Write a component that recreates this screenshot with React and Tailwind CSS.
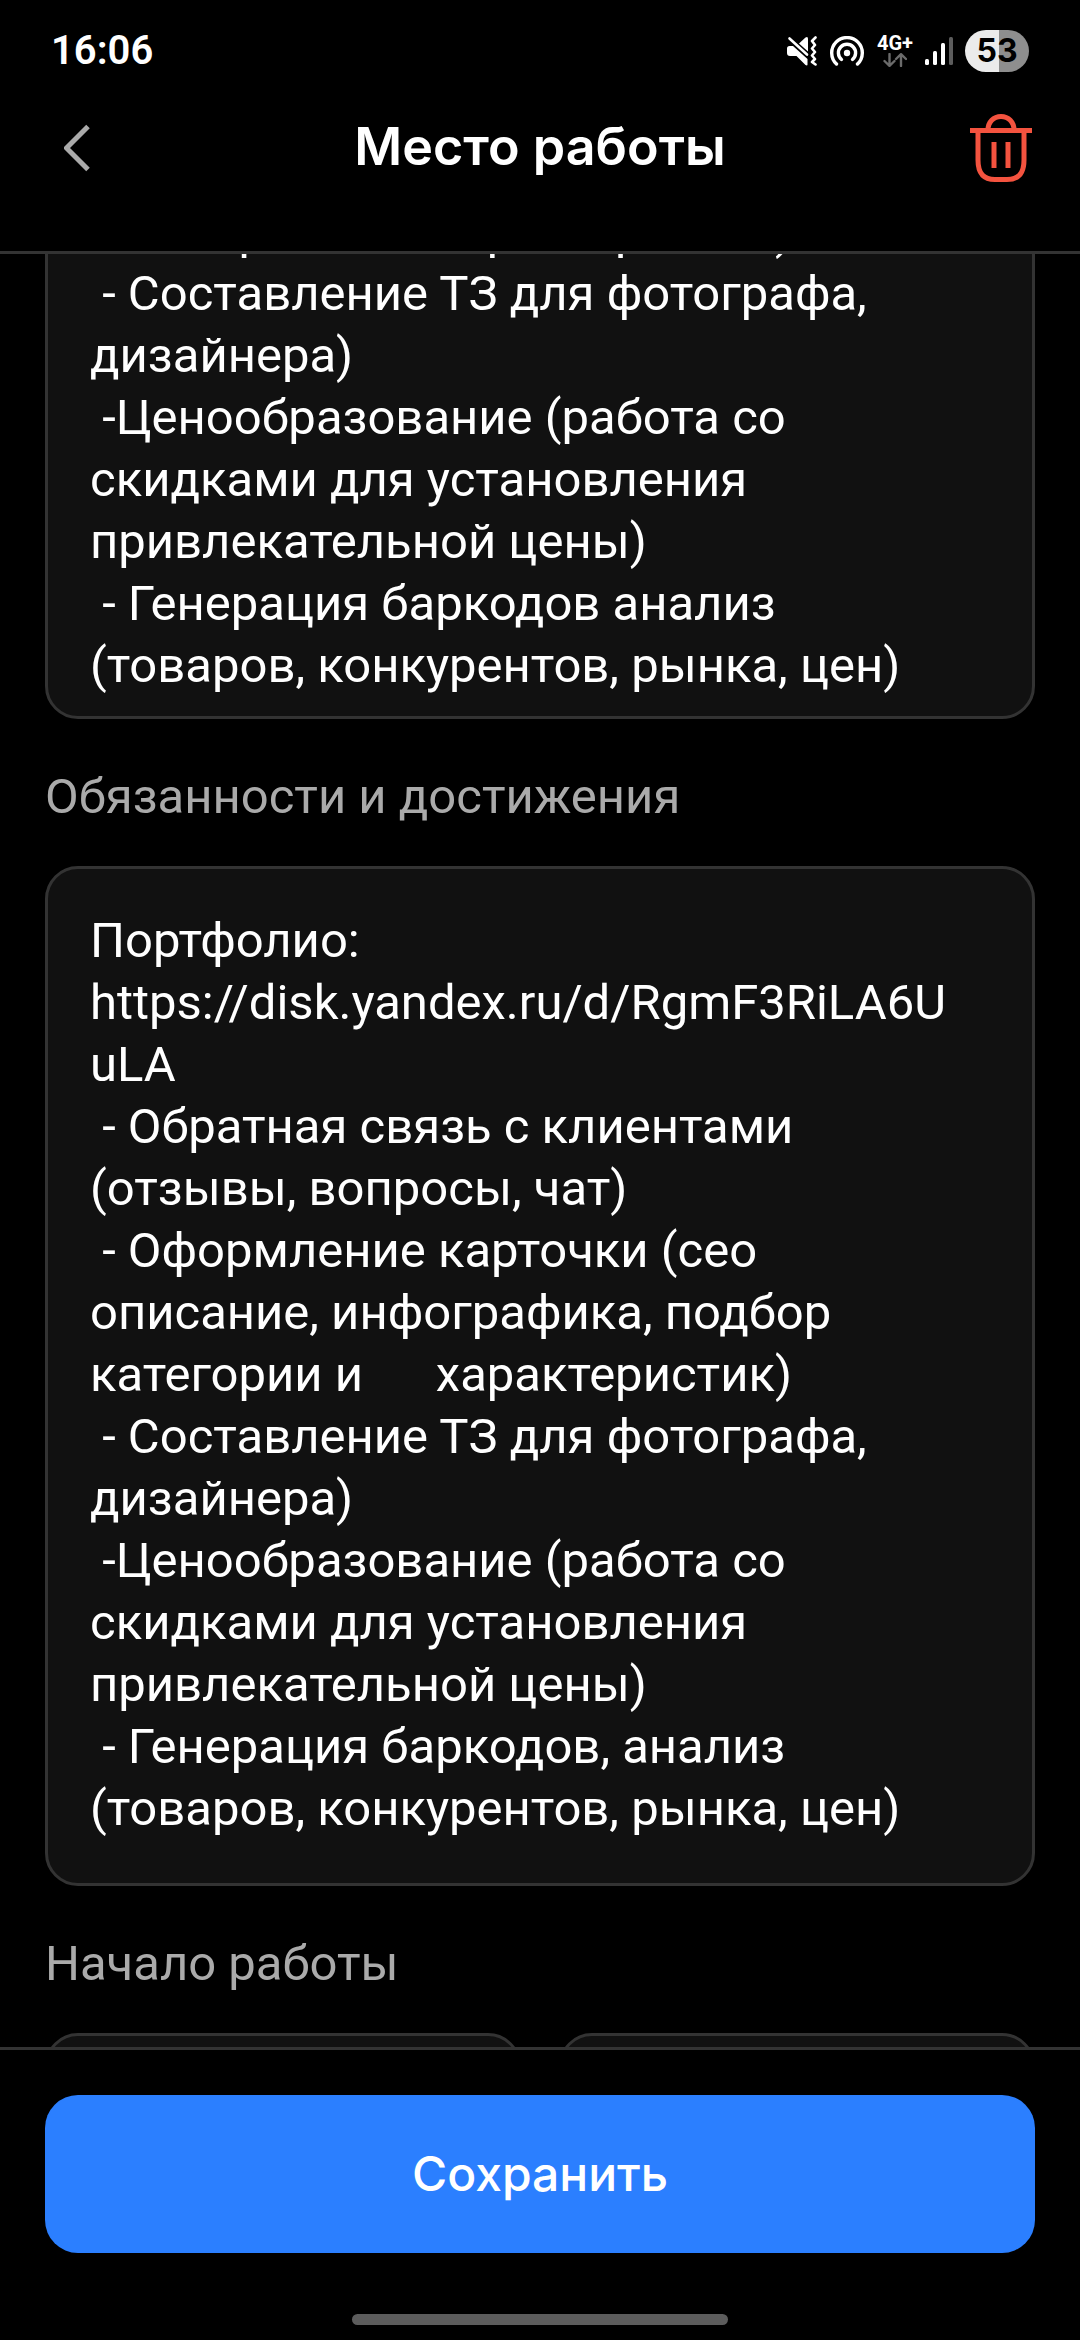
import React, { useState } from 'react';

const baseText = [
  'Портфолио:',
  'https://disk.yandex.ru/d/RgmF3RiLA6UuLA',
  ' - Обратная связь с клиентами (отзывы, вопросы, чат)',
  ' - Оформление карточки (сео описание, инфографика, подбор категории и      характеристик)',
  ' - Составление ТЗ для фотографа, дизайнера)',
  ' -Ценообразование (работа со скидками для установления привлекательной цены)',
];

const aboutText = [...baseText, ' - Генерация баркодов анализ (товаров, конкурентов, рынка, цен)'].join('\n');
const dutiesText = [...baseText, ' - Генерация баркодов, анализ (товаров, конкурентов, рынка, цен)'].join('\n');

const MuteIcon = () => (
  <svg width="30" height="30" viewBox="0 0 30 30" fill="#fff">
    <path d="M0 12.500Q0 10 2.500 10H6L20.500 23V28.500Q20.500 30 18.500 29L9.500 20H3Q0 20 0 17Z" />
    <path d="M12 7.500L18.500 1.500Q21 0 21 3V15.500Z" />
    <path d="M2.500 2.500L20 18.500" stroke="#fff" strokeWidth="2.600" strokeLinecap="round" />
    <path d="M28.500 1.500L25 5L28 9L25 12.500L28 16L25 19.500L28 23L25 26L28.500 28.500" fill="none" stroke="#fff" strokeWidth="2.600" strokeLinecap="round" strokeLinejoin="round" />
  </svg>
);

const HotspotIcon = () => (
  <svg width="36" height="30" viewBox="0 0 36 30" fill="none" stroke="#fff" strokeWidth="3.400" strokeLinecap="round">
    <path d="M7.500 28A15.300 15.300 0 1 1 28.500 28" />
    <path d="M12.500 23.500A8.600 8.600 0 1 1 23.500 23.500" />
    <circle cx="18" cy="17" r="3.200" fill="#fff" stroke="none" />
  </svg>
);

const DataArrows = () => (
  <svg width="24" height="14" viewBox="0 0 24 14" fill="none" stroke="#6b6b6b" strokeWidth="2.400" strokeLinecap="round" strokeLinejoin="round">
    <path d="M6.500 1V12.500M1.500 8L6.500 12.800L11.500 8" />
    <path d="M18 13V1.500M13 6L18 1.200L23 6" />
  </svg>
);

const SignalIcon = () => (
  <svg width="28" height="30" viewBox="0 0 28 30" fill="#fff">
    <rect x="0" y="23" width="4" height="6" rx="1.500" />
    <rect x="8" y="15" width="4" height="14" rx="1.500" />
    <rect x="16" y="7" width="4" height="22" rx="1.500" />
    <rect x="24" y="1" width="4" height="28" rx="1.500" fill="#5c5c5c" />
  </svg>
);

const TrashIcon = () => (
  <svg width="62" height="68" viewBox="0 0 62 68" fill="none" stroke="#f4533f" strokeWidth="5">
    <path d="M0 16.500H62" />
    <path d="M18 16C18 8 23.500 2.500 31 2.500S44 8 44 16" />
    <path d="M8 16.500V46C8 60 14 65.500 25 65.500H37C48 65.500 54 60 54 46V16.500" />
    <path d="M24 28V54M38 28V54" />
  </svg>
);

const StatusBar = () => (
  <div className="flex h-[102px] shrink-0 items-center justify-between px-[51px]">
    <span className="font-['Roboto',sans-serif] text-[40px] leading-[48px] font-semibold">16:06</span>
    <div className="flex items-center gap-3">
      <MuteIcon />
      <HotspotIcon />
      <div className="flex w-[36px] flex-col items-center gap-0.5">
        <span className="font-['Roboto',sans-serif] text-[20px] leading-4 font-bold">4G+</span>
        <DataArrows />
      </div>
      <SignalIcon />
      <div className="flex h-[42px] w-16 items-center justify-center rounded-full bg-linear-to-r from-[#ebebeb] from-53% to-[#8e8e8e] to-53%">
        <span className="font-['Inter',sans-serif] text-[32px] leading-[42px] font-bold text-black">53</span>
      </div>
    </div>
  </div>
);

const Header = () => (
  <header className="flex shrink-0 items-start justify-between border-b-3 border-[#333] px-12 pt-3 pb-[69px]">
    <button type="button" aria-label="Назад" className="flex h-[68px] w-[62px] items-center justify-center">
      <svg width="30" height="48" viewBox="0 0 30 48" fill="none" stroke="#aaa" strokeWidth="5">
        <path d="M24 2.500L2.500 24L24 45.500" />
      </svg>
    </button>
    <h1 className="font-['Inter',sans-serif] text-[52px] leading-[66px] font-semibold">Место работы</h1>
    <button type="button" aria-label="Удалить">
      <TrashIcon />
    </button>
  </header>
);

const fieldStyle = 'block w-full resize-none overflow-hidden rounded-[33px] border-3 border-[#333] bg-[#111] pl-[42px] pr-[66px] pt-[41px] text-[49px] leading-[62px] break-words outline-none';

export default function App() {
  const [about, setAbout] = useState(aboutText);
  const [duties, setDuties] = useState(dutiesText);

  return (
    <div className="flex h-screen flex-col bg-black font-['Roboto',Arial,sans-serif] text-white">
      <StatusBar />
      <Header />

      {/* Form, scrolled part of the way down */}
      <main className="min-h-0 flex-1 overflow-hidden px-[45px]">
        <div className="-mt-[531px] flex flex-col">
          <textarea
            aria-label="О работе"
            rows={15}
            value={about}
            onChange={(e) => setAbout(e.target.value)}
            className={`${fieldStyle} pb-[19px]`}
          />

          <label htmlFor="duties" className="mt-[47px] mb-[38px] text-[49px] leading-[62px] text-[#aaa]">
            Обязанности и достижения
          </label>
          <textarea
            id="duties"
            rows={15}
            value={duties}
            onChange={(e) => setDuties(e.target.value)}
            className={`${fieldStyle} pb-[43px]`}
          />

          <label htmlFor="start-month" className="mt-[47px] mb-[38px] text-[49px] leading-[62px] text-[#aaa]">
            Начало работы
          </label>
          <div className="grid grid-cols-2 gap-[38px]">
            <input id="start-month" className="h-[158px] w-full rounded-[33px] border-3 border-[#333] bg-[#111] px-[42px]" />
            <input aria-label="Год начала" className="h-[158px] w-full rounded-[33px] border-3 border-[#333] bg-[#111] px-[42px]" />
          </div>
        </div>
      </main>

      <footer className="flex shrink-0 flex-col items-center border-t-3 border-[#333] px-[45px] pt-[45px] pb-[15px]">
        <button type="button" className="h-[158px] w-full rounded-[33px] bg-[#2b7fff] font-['Inter',sans-serif] text-[48px] leading-[62px] font-medium">
          Сохранить
        </button>
        <div className="mt-[61px] h-[11px] w-[38%] rounded-full bg-[#5c5c5c]" />
      </footer>
    </div>
  );
}
